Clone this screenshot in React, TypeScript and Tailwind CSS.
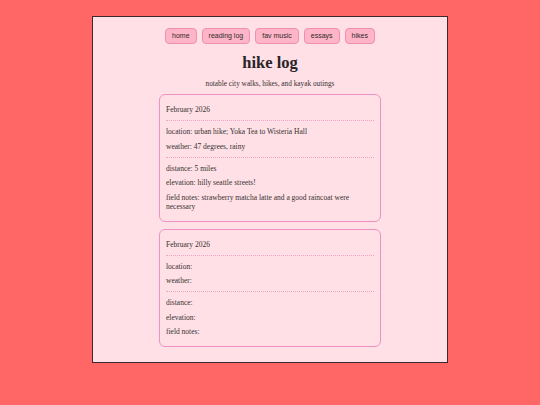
import React from 'react'

type Hike = {
  month: string
  location: string
  weather: string
  distance: string
  elevation: string
  notes: string
}

const links = ['home', 'reading log', 'fav music', 'essays', 'hikes']

const hikes: Hike[] = [
  {
    month: 'February 2026',
    location: 'urban hike; Yoka Tea to Wisteria Hall',
    weather: '47 degrees, rainy',
    distance: '5 miles',
    elevation: 'hilly seattle streets!',
    notes: 'strawberry matcha latte and a good raincoat were necessary',
  },
  {
    month: 'February 2026',
    location: '',
    weather: '',
    distance: '',
    elevation: '',
    notes: '',
  },
]

function Line({ label, value }: { label: string; value: string }) {
  return (
    <p className="leading-[9px]">
      {label}: {value}
    </p>
  )
}

function HikeCard({ hike }: { hike: Hike }) {
  return (
    <div className="w-[222px] rounded-[6px] border-[1.5px] border-[#ee92c4] bg-[#ffe0e6] px-[6px] pt-[10px] pb-[10px]">
      <div className="flex flex-col gap-[5.5px]">
        <p className="leading-[9px]">{hike.month}</p>
        <div className="my-[0.5px] border-t border-dotted border-[#f0a3c4]" />
        <Line label="location" value={hike.location} />
        <Line label="weather" value={hike.weather} />
        <div className="my-[0.5px] border-t border-dotted border-[#f0a3c4]" />
        <Line label="distance" value={hike.distance} />
        <Line label="elevation" value={hike.elevation} />
        <Line label="field notes" value={hike.notes} />
      </div>
    </div>
  )
}

export default function App() {
  return (
    <div className="min-h-[405px] w-full bg-[#ff6767] pt-[16px] pb-[42px]">
      <div
        className="mx-auto flex w-[356px] flex-col items-center border border-[#3a2a2c] bg-[#ffe0e6] pt-[11px] pb-[15px] text-[#36302f]"
        style={{ fontFamily: '"Liberation Serif", "DejaVu Serif", serif' }}
      >
        <nav className="flex gap-[5px]">
          {links.map((l) => (
            <span
              key={l}
              className="flex h-[16px] items-center rounded-[4px] border border-[#f08fb2] bg-[#ffb5c8] px-[6px] text-[7px] text-[#2e2a2b]"
              style={{ fontFamily: '"Liberation Sans", Arial, sans-serif' }}
            >
              {l}
            </span>
          ))}
        </nav>
        <h1 className="mt-[9px] text-[16.5px] leading-[19px] font-bold text-[#2a2426]">hike log</h1>
        <p className="mt-[7px] text-[7.3px] leading-[9px]">notable city walks, hikes, and kayak outings</p>
        <div className="mt-[6px] flex flex-col gap-[7px] text-[7.5px]">
          {hikes.map((h, i) => (
            <HikeCard key={i} hike={h} />
          ))}
        </div>
      </div>
    </div>
  )
}
